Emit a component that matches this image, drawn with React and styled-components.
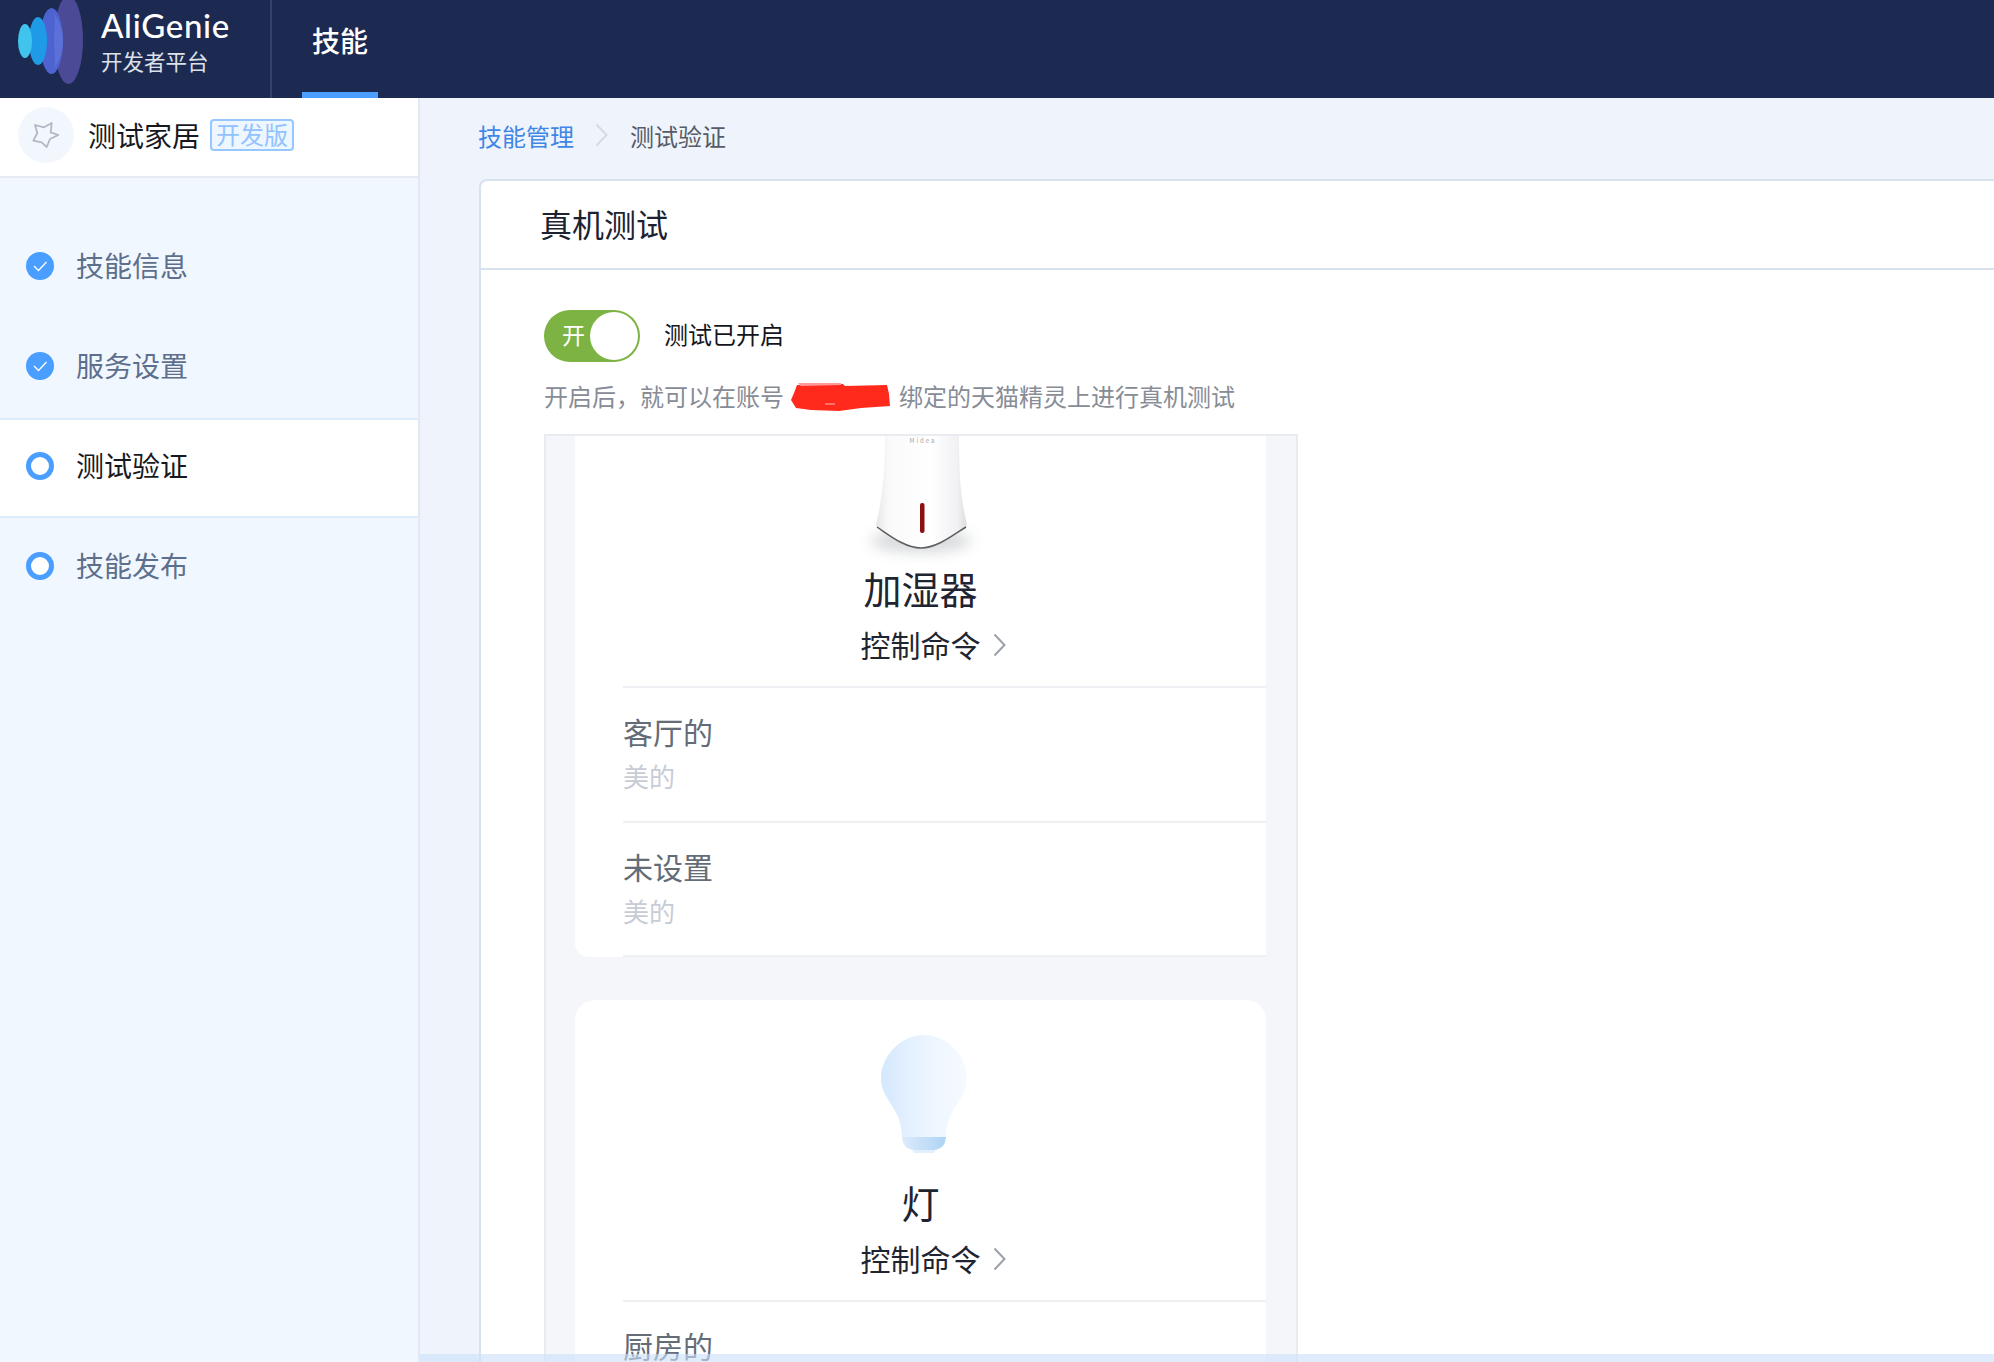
import React from "react";
import styled, { createGlobalStyle } from "styled-components";

const GlobalStyle = createGlobalStyle`
  html, body {
    margin: 0;
    padding: 0;
    height: 100%;
    overflow: hidden;
    background: #eff4fc;
  }
  * {
    box-sizing: border-box;
  }
  body {
    font-family: "Noto Sans CJK SC", "Noto Sans", sans-serif;
  }
`;

const Page = styled.div`
  width: 1994px;
  height: 1362px;
  display: flex;
  flex-direction: column;
  overflow: hidden;
  position: relative;
`;

const Header = styled.header`
  height: 98px;
  flex: none;
  display: flex;
  background: #1c2a52;
  overflow: hidden;
`;

const Brand = styled.div`
  width: 272px;
  position: relative;
  display: flex;
  flex-direction: column;
  padding: 5px 0 0 101px;
  border-right: 2px solid #33426a;
`;

const LogoMark = styled.svg`
  position: absolute;
  left: 0;
  top: 0;
`;

const BrandName = styled.div`
  font-family: "Lato", "Noto Sans", sans-serif;
  font-size: 33px;
  line-height: 40px;
  font-weight: 500;
  letter-spacing: 0.7px;
  color: #fff;
`;

const BrandSub = styled.div`
  font-size: 21.5px;
  line-height: 30px;
  margin-top: 1px;
  color: #dde1e8;
`;

const NavTab = styled.div`
  margin-left: 30px;
  width: 76px;
  height: 98px;
  padding-bottom: 12px;
  display: flex;
  align-items: center;
  justify-content: center;
  font-size: 28px;
  font-weight: 500;
  color: #fff;
  border-bottom: 6px solid #4a9eff;
`;

const Body = styled.div`
  flex: 1;
  display: flex;
  min-height: 0;
`;

const Sidebar = styled.aside`
  width: 420px;
  flex: none;
  background: #f1f7ff;
  border-right: 2px solid #e3e9f3;
`;

const SkillHead = styled.div`
  height: 80px;
  display: flex;
  align-items: center;
  padding: 0 0 4px 18px;
  background: #fff;
  border-bottom: 2px solid #e6ebf2;
`;

const Avatar = styled.div`
  width: 56px;
  height: 56px;
  border-radius: 50%;
  background: #f2f7fe;
  display: flex;
  align-items: center;
  justify-content: center;
`;

const SkillName = styled.div`
  margin-left: 14px;
  font-size: 28px;
  line-height: 40px;
  color: #17191f;
`;

const DevTag = styled.span`
  margin-left: 10px;
  width: 84px;
  height: 32px;
  border: 2px solid #96c7ff;
  border-radius: 4px;
  background: #eef6ff;
  color: #92c3ff;
  font-size: 24px;
  line-height: 26px;
  text-align: center;
`;

const Steps = styled.nav`
  padding-top: 40px;
`;

const Step = styled.div`
  height: 100px;
  display: flex;
  align-items: center;
  padding: 0 0 5px 26px;
  gap: 22px;
  font-size: 28px;
  color: ${(p) => (p.$active ? "#17191f" : "#5d6f8c")};
  background: ${(p) => (p.$active ? "#fff" : "transparent")};
  border-top: 2px solid ${(p) => (p.$active ? "#deebfa" : "transparent")};
  border-bottom: 2px solid ${(p) => (p.$active ? "#deebfa" : "transparent")};
`;

const StepLabel = styled.span`
  margin-top: -2px;
`;

const Main = styled.main`
  flex: 1;
  min-width: 0;
  padding-left: 59px;
  display: flex;
  flex-direction: column;
`;

const Breadcrumb = styled.div`
  height: 81px;
  flex: none;
  display: flex;
  align-items: center;
  padding-bottom: 7px;
  font-size: 24px;
`;

const CrumbLink = styled.span`
  color: #3f86e6;
  margin-left: -1px;
`;

const CrumbCurrent = styled.span`
  color: #555c68;
`;

const CrumbSep = styled.svg`
  margin: 0 22px 0 21px;
`;

const Card = styled.section`
  flex: 1;
  min-height: 0;
  background: #fff;
  border: 2px solid #d8e2ec;
  border-right: none;
  border-bottom: none;
  border-top-left-radius: 8px;
  display: flex;
  flex-direction: column;
`;

const CardHead = styled.div`
  height: 89px;
  flex: none;
  display: flex;
  align-items: center;
  padding: 0 0 4px 59px;
  border-bottom: 2px solid #d8e2ec;
  font-size: 32px;
  font-weight: 400;
  color: #1c2230;
`;

const CardBody = styled.div`
  flex: 1;
  min-height: 0;
  padding: 40px 0 0 63px;
  display: flex;
  flex-direction: column;
`;

const SwitchRow = styled.div`
  height: 52px;
  flex: none;
  display: flex;
  align-items: center;
  gap: 24px;
  font-size: 24px;
  color: #14161b;
`;

const SwitchLabel = styled.span`
  margin-top: -6px;
`;

const Switch = styled.div`
  width: 96px;
  height: 52px;
  border-radius: 26px;
  background: #7cb342;
  position: relative;
  display: flex;
  align-items: center;
  padding: 0 0 4px 18px;
  color: #fff;
  font-size: 23px;
`;

const SwitchKnob = styled.span`
  position: absolute;
  right: 2px;
  top: 2px;
  width: 48px;
  height: 48px;
  border-radius: 50%;
  background: #fff;
`;

const Hint = styled.div`
  margin-top: 18px;
  height: 34px;
  flex: none;
  display: flex;
  align-items: center;
  font-size: 24px;
  color: #878c96;
`;

const HintText = styled.span`
  margin-top: -4px;
`;

const Scribble = styled.svg`
  margin: 0 8px 0 7px;
`;

const Device = styled.div`
  margin-top: 20px;
  width: 754px;
  flex: 1;
  min-height: 0;
  overflow: hidden;
  padding: 0 0 0 29px;
  background: #f4f6fa;
  border: 2px solid #e9ebf1;
  border-bottom: none;
`;

const DeviceCard = styled.div`
  background: #fff;
  border-radius: ${(p) => (p.$first ? "0 0 0 14px" : "20px 20px 0 0")};
  margin-bottom: 43px;
  width: 691px;
  padding-top: ${(p) => (p.$first ? "0" : "35px")};
`;

const Picture = styled.div`
  display: flex;
  justify-content: center;
  margin-bottom: ${(p) => p.$gap || "0"};
  margin-left: ${(p) => p.$shift || "0"};
`;

const DeviceName = styled.div`
  height: 52px;
  font-size: 38px;
  line-height: 48px;
  text-align: center;
  color: #1f2530;
`;

const Commands = styled.div`
  margin-top: 8px;
  height: 42px;
  display: flex;
  align-items: center;
  justify-content: center;
  font-size: 30px;
  line-height: 38px;
  color: #1f2530;
`;

const CommandText = styled.span`
  margin-top: -3px;
`;

const CommandArrow = styled.svg`
  margin-left: 12px;
  margin-right: -25px;
`;

const Rows = styled.div`
  margin: 20px 0 0 48px;
`;

const Row = styled.div`
  height: 134.5px;
  padding-top: 22px;
  border-top: 2px solid #eef0f3;
`;

const LastLine = styled.div`
  border-top: 2px solid #eef0f3;
`;

const RowTitle = styled.div`
  font-size: 30px;
  line-height: 42px;
  color: #646c78;
`;

const RowSub = styled.div`
  margin-top: 6px;
  font-size: 26px;
  line-height: 36px;
  color: #c8ccd6;
`;

const BottomTint = styled.div`
  position: absolute;
  left: 420px;
  right: 0;
  bottom: 0;
  height: 8px;
  background: rgba(205, 225, 250, 0.62);
`;

function LogoIcon() {
  return (
    <LogoMark width="100" height="98" viewBox="0 0 100 98">
      <ellipse cx="68.5" cy="40" rx="14.5" ry="44" fill="#4a4a96" />
      <ellipse cx="51.5" cy="41" rx="11.5" ry="33" fill="#4d63cf" />
      <path d="M54 13 C60 22 63 31 63 41 C63 51 60 60 54 69 C56 61 54 50 54 41 C54 32 56 21 54 13 Z" fill="#5b70d8" />
      <ellipse cx="38" cy="41" rx="9" ry="24" fill="#1e9be4" />
      <ellipse cx="25" cy="41" rx="7" ry="17" fill="#40c4ee" />
    </LogoMark>
  );
}

function StarIcon() {
  return (
    <svg width="28" height="26" viewBox="0 0 28 26" fill="none">
      <path
        d="M3 3 L12 5.3 L19.7 1 L18.7 10.3 L26.3 13 L18 17 L14.7 25 L9.7 20.3 L1.3 18.7 L5.3 11 Z"
        stroke="#b0b8c4"
        strokeWidth="1.8"
        strokeLinejoin="round"
      />
    </svg>
  );
}

function StepIcon({ done }) {
  if (done) {
    return (
      <svg width="28" height="28" viewBox="0 0 28 28">
        <circle cx="14" cy="14" r="14" fill="#4a9eff" />
        <path d="M8 14 L12.5 18.5 L20.5 10" fill="none" stroke="#fff" strokeWidth="1.3" />
      </svg>
    );
  }
  return (
    <svg width="28" height="28" viewBox="0 0 28 28">
      <circle cx="14" cy="14" r="11.5" fill="#fff" stroke="#4a9eff" strokeWidth="5" />
    </svg>
  );
}

function Chevron({ as: Wrap, color }) {
  return (
    <Wrap width="13" height="24" viewBox="0 0 13 24" fill="none">
      <path d="M1.5 1.5 L11.5 12 L1.5 22.5" stroke={color} strokeWidth="2" />
    </Wrap>
  );
}

function RedMark() {
  return (
    <Scribble width="100" height="30" viewBox="0 0 100 30">
      <path d="M6 3 L52 2 L54 4 L96 3 L98 12 L99 24 L70 26 L48 29 L20 28 L5 26 L0 18 L3 11 Z" fill="#ff2a1c" />
      <path d="M7 1 L50 1 L50 3 L10 4 Z" fill="#ff9a9a" />
      <path d="M34 22 H44" stroke="#ff8a80" strokeWidth="1.5" />
    </Scribble>
  );
}

function Humidifier() {
  return (
    <svg width="200" height="128" viewBox="0 0 200 128">
      <defs>
        <linearGradient id="humBody" x1="0" x2="1" y1="0" y2="0">
          <stop offset="0" stopColor="#e6e7ea" />
          <stop offset="0.14" stopColor="#fafafa" />
          <stop offset="0.6" stopColor="#ffffff" />
          <stop offset="0.9" stopColor="#f1f1f3" />
          <stop offset="1" stopColor="#dcdde0" />
        </linearGradient>
        <filter id="humBlur" x="-40%" y="-150%" width="180%" height="400%">
          <feGaussianBlur stdDeviation="7" />
        </filter>
      </defs>
      <ellipse cx="100" cy="105" rx="50" ry="11" fill="#a4a9ad" opacity="0.45" filter="url(#humBlur)" />
      <path
        d="M64 0 L138 0 C138 40 140 62 145 84 C146 88 146 90 145 91 C132 99 116 112 100 112 C84 112 68 99 56 91 C55 90 55 88 56 84 C61 62 64 40 64 0 Z"
        fill="url(#humBody)"
      />
      <path
        d="M56 91 C68 99 84 112 100 112 C116 112 132 99 145 91"
        fill="none"
        stroke="#5b5e62"
        strokeWidth="1.5"
      />
      <rect x="99" y="67" width="4.5" height="30" rx="2" fill="#8c0f12" />
      <text x="101" y="7" textAnchor="middle" fontSize="6" fill="#a4a6aa" textLength="25">Midea</text>
    </svg>
  );
}

function Bulb() {
  return (
    <svg width="88" height="118" viewBox="0 0 88 118">
      <defs>
        <linearGradient id="bulbGlass" x1="0" x2="1" y1="0" y2="0">
          <stop offset="0" stopColor="#d5e8fe" />
          <stop offset="0.55" stopColor="#ecf5ff" />
          <stop offset="1" stopColor="#f6faff" />
        </linearGradient>
        <linearGradient id="bulbBase" x1="0" x2="1" y1="0" y2="0">
          <stop offset="0" stopColor="#dcebfb" />
          <stop offset="1" stopColor="#aed3f5" />
        </linearGradient>
      </defs>
      <path
        d="M44 0 C20 0 1 22 1 43 C1 66 22 72 22 102 L66 102 C66 72 87 66 87 43 C87 22 68 0 44 0 Z"
        fill="url(#bulbGlass)"
      />
      <path d="M22 102 L66 102 L65 107 C64 112 58 115 53 115 L35 115 C30 115 24 112 23 107 Z" fill="url(#bulbBase)" />
      <path d="M32 115 L56 115 L54 118 L34 118 Z" fill="#e2f0fd" />
    </svg>
  );
}

const steps = [
  { name: "技能信息", done: true },
  { name: "服务设置", done: true },
  { name: "测试验证", active: true },
  { name: "技能发布" },
];

const rows = [
  { title: "客厅的", sub: "美的" },
  { title: "未设置", sub: "美的" },
];

export default function App() {
  return (
    <Page>
      <GlobalStyle />
      <Header>
        <Brand>
          <LogoIcon />
          <BrandName>AliGenie</BrandName>
          <BrandSub>开发者平台</BrandSub>
        </Brand>
        <NavTab>技能</NavTab>
      </Header>
      <Body>
        <Sidebar>
          <SkillHead>
            <Avatar>
              <StarIcon />
            </Avatar>
            <SkillName>测试家居</SkillName>
            <DevTag>开发版</DevTag>
          </SkillHead>
          <Steps>
            {steps.map((s) => (
              <Step key={s.name} $active={s.active}>
                <StepIcon done={s.done} />
                <StepLabel>{s.name}</StepLabel>
              </Step>
            ))}
          </Steps>
        </Sidebar>
        <Main>
          <Breadcrumb>
            <CrumbLink>技能管理</CrumbLink>
            <Chevron as={CrumbSep} color="#d5dbe3" />
            <CrumbCurrent>测试验证</CrumbCurrent>
          </Breadcrumb>
          <Card>
            <CardHead>真机测试</CardHead>
            <CardBody>
              <SwitchRow>
                <Switch>
                  开
                  <SwitchKnob />
                </Switch>
                <SwitchLabel>测试已开启</SwitchLabel>
              </SwitchRow>
              <Hint>
                <HintText>开启后，就可以在账号</HintText>
                <RedMark />
                <HintText>绑定的天猫精灵上进行真机测试</HintText>
              </Hint>
              <Device>
                <DeviceCard $first>
                  <Picture>
                    <Humidifier />
                  </Picture>
                  <DeviceName>加湿器</DeviceName>
                  <Commands>
                    <CommandText>控制命令</CommandText>
                    <Chevron as={CommandArrow} color="#9aa0ac" />
                  </Commands>
                  <Rows>
                    {rows.map((r) => (
                      <Row key={r.title}>
                        <RowTitle>{r.title}</RowTitle>
                        <RowSub>{r.sub}</RowSub>
                      </Row>
                    ))}
                    <LastLine />
                  </Rows>
                </DeviceCard>
                <DeviceCard>
                  <Picture $gap="25px" $shift="6px">
                    <Bulb />
                  </Picture>
                  <DeviceName>灯</DeviceName>
                  <Commands>
                    <CommandText>控制命令</CommandText>
                    <Chevron as={CommandArrow} color="#9aa0ac" />
                  </Commands>
                  <Rows>
                    <Row>
                      <RowTitle>厨房的</RowTitle>
                    </Row>
                  </Rows>
                </DeviceCard>
              </Device>
            </CardBody>
          </Card>
        </Main>
      </Body>
      <BottomTint />
    </Page>
  );
}
